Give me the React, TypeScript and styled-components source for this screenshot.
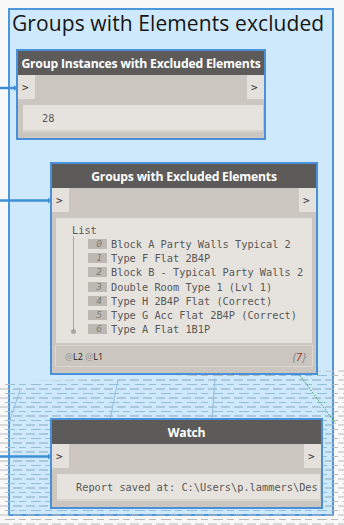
import styled, { createGlobalStyle } from "styled-components";

const GlobalStyle = createGlobalStyle`
  html, body {
    margin: 0;
    padding: 0;
    background: #f7f7f7;
  }
`;

const UI_FONT = `"Open Sans", "Noto Sans", "DejaVu Sans", sans-serif`;
const MONO_FONT = `"DejaVu Sans Mono", "Liberation Mono", monospace`;

const listItems = [
  "Block A Party Walls Typical 2",
  "Type F Flat 2B4P",
  "Block B - Typical Party Walls 2",
  "Double Room Type 1 (Lvl 1)",
  "Type H 2B4P Flat (Correct)",
  "Type G Acc Flat 2B4P (Correct)",
  "Type A Flat 1B1P",
];

interface NodeProps {
  title: string;
  left: number;
  top: number;
  width: number;
  children: React.ReactNode;
}

const Node: React.FC<NodeProps> = ({ title, left, top, width, children }: NodeProps) => {
  return (
    <NodeBox $left={left} $top={top} $width={width}>
      <NodeHeader>{title}</NodeHeader>
      <PortRow>
        <Port>&gt;</Port>
        <Port>&gt;</Port>
      </PortRow>
      {children}
    </NodeBox>
  );
};

// background image of the canvas: faint dashes drawn in perspective
const Backdrop = () => (
  <BackdropSvg width="344" height="525" viewBox="0 0 344 525">
    <defs>
      <pattern id="dashGrey" width="26" height="9" patternUnits="userSpaceOnUse">
        <path d="M0 2h9M13 2h9M5 6.5h10M19 6.5h7" stroke="#b9b9b9" strokeWidth="1" />
      </pattern>
      <pattern id="dashBlue" width="26" height="9" patternUnits="userSpaceOnUse">
        <path d="M0 2h9M13 2h9M5 6.5h10M19 6.5h7" stroke="#93bfdc" strokeWidth="1" />
      </pattern>
    </defs>
    <polygon points="0,382 344,370 344,525 0,525" fill="url(#dashGrey)" />
    <polygon points="10,382 332,374 332,513 10,513" fill="url(#dashBlue)" />
    <path d="M20 390L10 420M118 380L110 420M215 378L212 420" stroke="#93bfdc" strokeWidth="1" />
    <line x1="298" y1="373" x2="336" y2="424" stroke="#2f9a4a" strokeWidth="1" strokeDasharray="1.5 1.5" />
  </BackdropSvg>
);

const Wires = () => (
  <WireSvg width="344" height="525" viewBox="0 0 344 525">
    <path d="M0 88H17M0 200.5H51M0 456.5H51" stroke="#3f8fd6" strokeWidth="2.5" fill="none" />
    <path d="M14 85l3 3-3 3zM48 197.5l3 3-3 3zM48 453.5l3 3-3 3z" fill="#3f8fd6" />
  </WireSvg>
);

const App: React.FC = () => {
  return (
    <>
      <GlobalStyle />
      <Canvas>
        <Group>
          <GroupTitle>Groups with Elements excluded</GroupTitle>
        </Group>
        <Backdrop />
        <Wires />

        <Node title="Group Instances with Excluded Elements" left={16} top={49} width={250}>
          <ValueBox $height={25}>
            <ValueText $indent={19}>28</ValueText>
          </ValueBox>
        </Node>

        <Node title="Groups with Excluded Elements" left={50} top={162} width={268}>
          <ListPanel>
            <ListLabel>List</ListLabel>
            <ListBody>
              <TreeLine />
              <Rows>
                {listItems.map((item, i) => (
                  <Row key={i}>
                    <Index>{i}</Index>
                    <RowText>{item}</RowText>
                  </Row>
                ))}
              </Rows>
            </ListBody>
          </ListPanel>
          <Footer>
            <Levels>
              <At>@</At>L2 <At>@</At>L1
            </Levels>
            <Count>
              {"{"}
              <CountNum>7</CountNum>
              {"}"}
            </Count>
          </Footer>
        </Node>

        <Node title="Watch" left={50} top={418} width={273}>
          <ValueBox $height={25}>
            <ValueText $indent={19}>Report saved at: C:\Users\p.lammers\Des</ValueText>
          </ValueBox>
        </Node>
      </Canvas>
    </>
  );
};

const Canvas = styled.div`
  position: relative;
  width: 344px;
  height: 525px;
  overflow: hidden;
  background: #f8f8f8;
`;

const Group = styled.div`
  position: absolute;
  left: 8px;
  top: 8px;
  width: 326px;
  height: 508px;
  box-sizing: border-box;
  border: 2px solid #4c96dc;
  background: #cfe9fc;
`;

const GroupTitle = styled.div`
  font-family: ${UI_FONT};
  font-size: 21px;
  line-height: 24px;
  letter-spacing: 0.1px;
  color: #151515;
  padding: 1px 0 0 2px;
  white-space: nowrap;
`;

const BackdropSvg = styled.svg`
  position: absolute;
  left: 0;
  top: 0;
`;

const WireSvg = styled.svg`
  position: absolute;
  left: 0;
  top: 0;
`;

const NodeBox = styled.div<{ $left: number; $top: number; $width: number }>`
  position: absolute;
  left: ${({ $left }) => $left}px;
  top: ${({ $top }) => $top}px;
  width: ${({ $width }) => $width}px;
  box-sizing: border-box;
  border: 2px solid #4a90d8;
  background: #cbc7c0;
  display: flex;
  flex-direction: column;
  padding-bottom: 6px;
`;

const NodeHeader = styled.div`
  height: 24px;
  background: #5d5b59;
  color: #ffffff;
  font-family: ${UI_FONT};
  font-weight: 700;
  font-size: 12.2px;
  letter-spacing: -0.2px;
  display: flex;
  align-items: center;
  justify-content: center;
  white-space: nowrap;
`;

const PortRow = styled.div`
  height: 24px;
  display: flex;
  justify-content: space-between;
  margin-bottom: 6px;
`;

const Port = styled.div`
  width: 17px;
  background: #e4e1dc;
  color: #333;
  font-family: ${MONO_FONT};
  font-size: 11px;
  display: flex;
  align-items: center;
  padding-left: 4px;
  box-sizing: border-box;
`;

const ValueBox = styled.div<{ $height: number }>`
  height: ${({ $height }) => $height}px;
  margin: 0 1px 0 5px;
  background: #e6e3de;
  border-bottom: 2px solid #d8d4ce;
  display: flex;
  align-items: center;
`;

const ValueText = styled.span<{ $indent: number }>`
  padding-left: ${({ $indent }) => $indent}px;
  font-family: ${MONO_FONT};
  font-size: 10.3px;
  color: #585858;
  white-space: nowrap;
`;

const ListPanel = styled.div`
  margin: 0 4px 0 4px;
  background: #e6e3de;
  padding: 6px 0 4px 16px;
  height: 125px;
  box-sizing: border-box;
  display: flex;
  flex-direction: column;
`;

const ListLabel = styled.div`
  font-family: ${MONO_FONT};
  font-size: 10.3px;
  line-height: 12px;
  color: #5a5a5a;
`;

const ListBody = styled.div`
  display: flex;
  gap: 14px;
`;

const TreeLine = styled.div`
  position: relative;
  width: 1px;
  height: 96px;
  margin-left: 1px;
  background: #aaa6a0;

  &::after {
    content: "";
    position: absolute;
    left: -2px;
    bottom: -2px;
    width: 5px;
    height: 5px;
    border-radius: 50%;
    background: #aaa6a0;
  }
`;

const Rows = styled.div`
  display: flex;
  flex-direction: column;
  padding-top: 1px;
`;

const Row = styled.div`
  height: 14.2px;
  display: flex;
  align-items: center;
  gap: 4px;
`;

const Index = styled.span`
  width: 19px;
  height: 10px;
  background: #bdb9b2;
  color: #7d7a75;
  font-family: ${MONO_FONT};
  font-style: italic;
  font-size: 9.5px;
  line-height: 10px;
  text-align: right;
  padding-right: 5px;
  box-sizing: border-box;
`;

const RowText = styled.span`
  font-family: ${MONO_FONT};
  font-size: 10.3px;
  color: #585858;
  white-space: nowrap;
`;

const Footer = styled.div`
  margin: 2px 3px 0 3px;
  height: 22px;
  box-sizing: border-box;
  border: 1px solid #dbd7d1;
  display: flex;
  align-items: center;
  justify-content: space-between;
  padding: 0 6px 0 9px;
`;

const Levels = styled.span`
  font-family: ${UI_FONT};
  font-size: 9px;
  color: #222;
`;

const At = styled.span`
  color: #9a9792;
`;

const Count = styled.span`
  font-family: ${UI_FONT};
  font-style: italic;
  font-size: 11px;
  color: #7d8590;
`;

const CountNum = styled.span`
  color: #9b2a22;
`;

export default App;
